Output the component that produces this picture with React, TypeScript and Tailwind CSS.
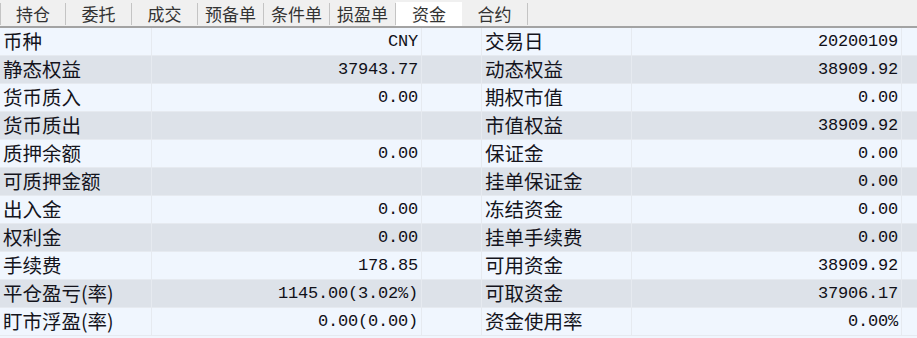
import React from "react";

const tabs = ["持仓", "委托", "成交", "预备单", "条件单", "损盈单", "资金", "合约"];

const rows: [string, string, string, string][] = [
  ["币种", "CNY", "交易日", "20200109"],
  ["静态权益", "37943.77", "动态权益", "38909.92"],
  ["货币质入", "0.00", "期权市值", "0.00"],
  ["货币质出", "", "市值权益", "38909.92"],
  ["质押余额", "0.00", "保证金", "0.00"],
  ["可质押金额", "", "挂单保证金", "0.00"],
  ["出入金", "0.00", "冻结资金", "0.00"],
  ["权利金", "0.00", "挂单手续费", "0.00"],
  ["手续费", "178.85", "可用资金", "38909.92"],
  ["平仓盈亏(率)", "1145.00(3.02%)", "可取资金", "37906.17"],
  ["盯市浮盈(率)", "0.00(0.00)", "资金使用率", "0.00%"],
];

const cjk = { fontFamily: '"Noto Sans CJK SC", sans-serif' };
const mono = { fontFamily: '"Liberation Mono", monospace' };

function Label({ text }: { text: string }) {
  return (
    <div
      className="flex items-center pl-[3px] pb-[2px] text-[19.5px] leading-none text-[#14141c] border-r border-[#e6eaf0] whitespace-nowrap"
      style={cjk}
    >
      {text}
    </div>
  );
}

function Value({ text }: { text: string }) {
  return (
    <div
      className="flex items-center justify-end pr-[3px] text-[17px] leading-none text-[#101018] border-r border-[#e6eaf0] tracking-[-0.2px]"
      style={mono}
    >
      {text}
    </div>
  );
}

export default function App() {
  return (
    <div className="w-[917px] h-[338px] overflow-hidden bg-[#f0f6fe]">
      {/* Tabs */}
      <div className="h-[26px] bg-[#f0f0f0] flex items-end">
        {tabs.map((t, i) => (
          <div
            key={t}
            className={
              t === "资金"
                ? "w-[66px] h-[24px] pb-[1px] bg-white flex items-center justify-center text-[17px] leading-none text-[#333]"
                : "w-[66px] h-[22px] mb-[1px] pb-[1px] border-r border-[#c4c4c4] flex items-center justify-center text-[17px] leading-none text-[#333]" +
                  (i === 0 ? " border-l" : "")
            }
            style={cjk}
          >
            {t}
          </div>
        ))}
      </div>
      <div className="h-[2px] bg-[#a3a3a3]" />

      {/* Fund rows */}
      <div>
        {rows.map((r, i) => (
          <div
            key={r[0]}
            className={
              "grid grid-cols-[152px_270px_60px_150px_270px_1fr] h-[28px] border-b border-[#e6eaf0] " +
              (i % 2 === 0 ? "bg-[#f0f6fe]" : "bg-[#dde2e9]")
            }
          >
            <Label text={r[0]} />
            <Value text={r[1]} />
            <div className="border-r border-[#e6eaf0]" />
            <Label text={r[2]} />
            <Value text={r[3]} />
            <div />
          </div>
        ))}
      </div>
    </div>
  );
}
